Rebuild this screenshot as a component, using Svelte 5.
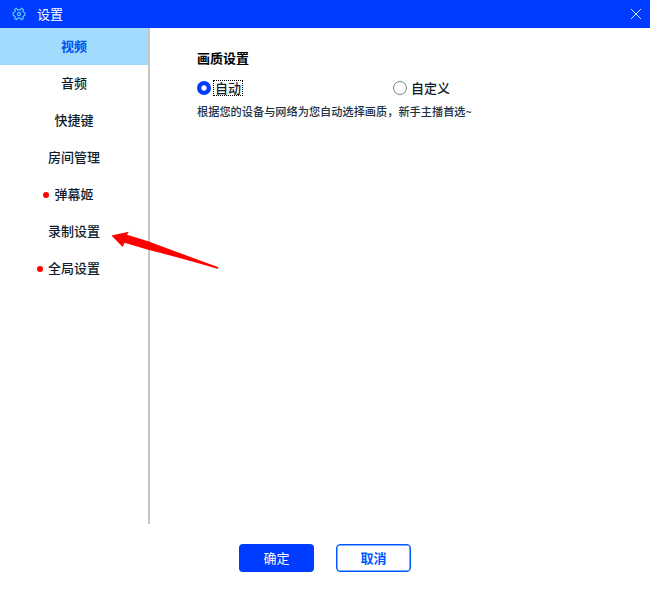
<script>
    let tabs = [
        { name: "视频" },
        { name: "音频" },
        { name: "快捷键" },
        { name: "房间管理" },
        { name: "弹幕姬", dot: true },
        { name: "录制设置" },
        { name: "全局设置", dot: true }
    ];
    let modes = ["自动", "自定义"];

    let active = $state("视频");
    let mode = $state("自动");
</script>

<div class="window">
    <header>
        <svg class="gear" viewBox="0 0 14 14" width="14" height="14">
            <path d="M4.3 1.3 L5.7 2.9 H8.3 L9.7 1.3 L11.3 2.4 L10.8 4.5 L12.9 5.8 V8.2 L10.8 9.5 L11.3 11.6 L9.7 12.7 L8.3 11.1 H5.7 L4.3 12.7 L2.7 11.6 L3.2 9.5 L1.1 8.2 V5.8 L3.2 4.5 L2.7 2.4 Z" />
            <circle cx="7" cy="7" r="1.6" />
        </svg>
        <span class="title">设置</span>
        <svg class="close" viewBox="0 0 12 12" width="12" height="12">
            <path d="M1 1 L11 11 M11 1 L1 11" />
        </svg>
    </header>

    <div class="body">
        <nav>
            {#each tabs as tab}
                <button class="tab" class:active={active === tab.name} onclick={() => active = tab.name}>
                    <span class="label">
                        {#if tab.dot}<i class="dot"></i>{/if}{tab.name}
                    </span>
                </button>
            {/each}
        </nav>

        <main>
            <h2>画质设置</h2>
            <div class="modes">
                {#each modes as item}
                    <button class="mode" class:checked={mode === item} onclick={() => mode = item}>
                        <span class="radio"></span>
                        <span class="text">{item}</span>
                    </button>
                {/each}
            </div>
            <p>根据您的设备与网络为您自动选择画质，新手主播首选~</p>
        </main>
    </div>

    <footer>
        <button class="btn ok">确定</button>
        <button class="btn cancel">取消</button>
    </footer>

    <svg class="arrow" viewBox="0 0 108 40" width="108" height="40">
        <path d="M0.5 4.4 L17.8 0.7 L16 3.7 L37 10.3 L67.3 21.5 L106.8 36 Q108 37.6 106.4 37.8 L84 31.3 L49 21.7 L37 18.7 L13.5 11.7 L11.7 16 Z" />
    </svg>
</div>

<style>
    :global(body){
        background: white;
    }
    .window{
        position: relative;
        width: 650px;
        height: 594px;
        display: flex;
        flex-direction: column;
        overflow: hidden;
        background: white;
        color: #101c2a;
        font: 500 13px/18px "Noto Sans CJK SC", sans-serif;
    }
    button{
        padding: 0;
        border: none;
        background: none;
        color: inherit;
        font: inherit;
    }
    header{
        display: flex;
        align-items: center;
        height: 28px;
        padding: 0 8px 0 12px;
        box-sizing: border-box;
        background: #003cff;
        color: white;
        font-weight: 400;
    }
    .gear{
        fill: none;
        stroke: #5fd0ff;
        stroke-width: 1.1;
    }
    .title{
        flex: 1;
        margin-left: 11px;
        padding-bottom: 1px;
    }
    .close{
        fill: none;
        stroke: #b4f0ff;
        stroke-width: 1;
    }
    .body{
        display: flex;
        height: 496px;
    }
    nav{
        display: flex;
        flex-direction: column;
        width: 150px;
        box-sizing: border-box;
        border-right: 2px solid #c6c6c6;
    }
    .tab{
        height: 37.15px;
        padding-bottom: 2px;
    }
    .tab.active{
        background: #a3dbff;
        color: #0050f0;
        font-weight: 700;
    }
    .label{
        position: relative;
    }
    .dot{
        position: absolute;
        left: -11px;
        top: 8px;
        width: 6px;
        height: 6px;
        border-radius: 50%;
        background: #ff0000;
    }
    main{
        padding: 21px 0 0 47px;
    }
    h2{
        margin: 0;
        color: #000;
        font-size: 13px;
        line-height: 18px;
        font-weight: 700;
    }
    .modes{
        display: flex;
        margin-top: 12px;
    }
    .mode{
        display: flex;
        align-items: center;
        width: 196px;
        height: 18px;
    }
    .radio{
        width: 14px;
        height: 14px;
        box-sizing: border-box;
        border: 1px solid #6f8094;
        border-radius: 50%;
    }
    .checked .radio{
        border: none;
        background: radial-gradient(circle, white 2.3px, #003cff 3.1px);
    }
    .text{
        margin-left: 3px;
        padding: 0 1px;
        line-height: 14px;
    }
    .checked .text{
        outline: 1px dotted #000;
        outline-offset: 0;
    }
    p{
        margin: 6px 0 0;
        color: #1e3246;
        font-size: 11.2px;
        line-height: 16px;
        white-space: nowrap;
    }
    footer{
        display: flex;
        justify-content: center;
        gap: 22px;
        padding-top: 20px;
    }
    .btn{
        width: 75px;
        height: 28px;
        border-radius: 4px;
    }
    .ok{
        background: #003cff;
        color: white;
        font-weight: 400;
    }
    .cancel{
        border: 1.5px solid #0058ff;
        box-shadow: inset 0 0 0 0.5px #0058ff;
        color: #0058ff;
        font-weight: 700;
    }
    .arrow{
        position: absolute;
        left: 111px;
        top: 231px;
        fill: #ff0000;
        pointer-events: none;
    }
</style>
